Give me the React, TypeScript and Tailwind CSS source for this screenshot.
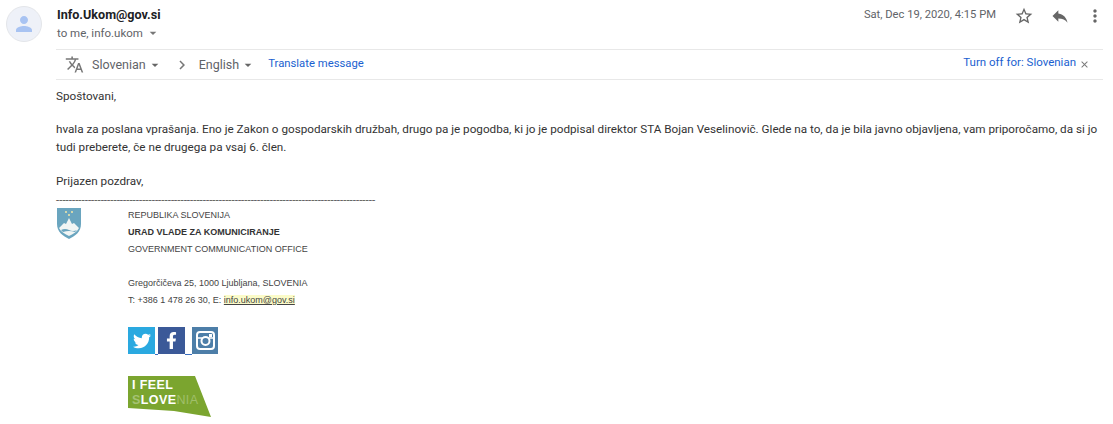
import { MdClose, MdMoreVert, MdPerson, MdReply, MdStarBorder, MdTranslate, MdArrowDropDown, MdChevronRight } from "react-icons/md";
import { FaFacebookF, FaTwitter } from "react-icons/fa";

function Crest() {
  return (
    <svg width="26" height="32" viewBox="0 0 26 32">
      <path d="M1 1 H25 V17 C25 25 19 29 13 32 C7 29 1 25 1 17 Z" fill="#6aa5bf" />
      <path d="M3 21 L8 16 L10 17 L13 11 L16 17 L18 16 L23 21 C21 25 17 27 13 29 C9 27 5 25 3 21 Z" fill="#f1f5f4" />
      <path d="M5 23 Q9 21 13 23 T21 23 L19 25 Q13 23 7 25 Z" fill="#6aa5bf" />
      <circle cx="10" cy="5" r="1" fill="#f5e9a8" />
      <circle cx="16" cy="5" r="1" fill="#f5e9a8" />
      <circle cx="13" cy="8" r="1" fill="#f5e9a8" />
    </svg>
  );
}

function InstagramGlyph() {
  return (
    <svg width="19" height="19" viewBox="0 0 19 19">
      <rect x="1" y="1" width="17" height="17" rx="3" fill="none" stroke="#fff" strokeWidth="2" />
      <path d="M1 7 H18" stroke="#fff" strokeWidth="1.5" />
      <circle cx="9.5" cy="10" r="4" fill="#4d7ea8" stroke="#fff" strokeWidth="2" />
      <rect x="13" y="3" width="3" height="3" fill="#fff" />
    </svg>
  );
}

function SloveniaBadge() {
  return (
    <div className="relative w-[84px] h-[43px]">
      <svg width="84" height="43" viewBox="0 0 84 43" className="absolute inset-0">
        <path d="M0 0 H67 L83 41 L46 35 L0 32 Z" fill="#7ba52f" />
      </svg>
      <div className="absolute left-[4px] top-[2px] text-[12.5px] leading-[14.5px] font-bold text-white tracking-[0.4px] font-['Liberation_Sans',sans-serif]">
        <div>I FEEL</div>
        <div className="flex">
          <span className="text-[#a5c274]">S</span>
          <span>LOVE</span>
          <span className="text-[#a0bf6a] font-normal">NIA</span>
        </div>
      </div>
    </div>
  );
}

export default function App() {
  return (
    <div className="w-[1113px] h-[424px] overflow-hidden bg-white flex pl-[6px] pt-[6px] text-[#222] font-['Roboto',sans-serif] text-[12px]">
      <div className="w-[36px] h-[36px] rounded-full bg-[#eef1f8] border border-[#e4e6ea] flex items-center justify-center shrink-0">
        <MdPerson size={24} className="text-[#a8c3f2]" />
      </div>

      <div className="ml-[14px] w-[1047px]">
        <div className="flex justify-between h-[43px]">
          <div>
            <div className="text-[12.6px] leading-[18px] font-bold text-[#202124] ml-px">Info.Ukom@gov.si</div>
            <div className="flex items-center leading-[16px] mt-[1px] ml-px text-[#5f6368] text-[11.5px]">
              to me, info.ukom
              <MdArrowDropDown size={16} className="ml-[2px] text-[#777]" />
            </div>
          </div>
          <div className="flex items-start text-[#5f6368] text-[11.2px] pt-[1px]">
            <span className="leading-[16px] mr-[18px]">Sat, Dec 19, 2020, 4:15 PM</span>
            <MdStarBorder size={20} className="text-[#666] mr-[16px] -mt-[1px]" />
            <MdReply size={20} className="text-[#666] mr-[15px] -mt-[1px]" />
            <MdMoreVert size={20} className="text-[#666] -mr-[2px] -mt-[1px]" />
          </div>
        </div>

        <div className="h-[31px] border-y border-[#e8e8e8] flex items-center justify-between text-[12.5px]">
          <div className="flex items-center text-[#5f6368] pl-[9px]">
            <MdTranslate size={19} className="text-[#777] mr-[8px]" />
            <span className="mt-[1px]">Slovenian</span>
            <MdArrowDropDown size={16} className="ml-[1px] text-[#666]" />
            <MdChevronRight size={18} className="ml-[10px] text-[#777]" />
            <span className="ml-[8px] mt-[1px]">English</span>
            <MdArrowDropDown size={16} className="ml-[1px] text-[#666]" />
            <span className="ml-[12px] text-[#1a5fd0] text-[11.3px]">Translate message</span>
          </div>
          <div className="flex items-center text-[#1a5fd0] text-[11.5px] pr-[13px] -mt-[4px]">
            <span>Turn off for: Slovenian</span>
            <MdClose size={11} className="ml-[3px] mt-[4px] text-[#777]" />
          </div>
        </div>

        <div className="leading-[18px] text-[#333] text-[11.7px] mt-[7px]">
          <div>Spoštovani,</div>
          <div className="mt-[15px] w-[1050px]">
            hvala za poslana vprašanja. Eno je Zakon o gospodarskih družbah, drugo pa je pogodba, ki jo je podpisal direktor STA Bojan Veselinovič. Glede na to, da je bila javno objavljena, vam priporočamo, da si jo tudi preberete, če ne drugega pa vsaj 6. člen.
          </div>
          <div className="mt-[16px]">Prijazen pozdrav,</div>
          <div className="leading-[10px] whitespace-nowrap text-[#555] text-[11.55px] mt-[5px]">
            ----------------------------------------------------------------------------------------------------
          </div>
        </div>

        <div className="flex font-['Liberation_Sans',sans-serif]">
          <div className="w-[72px] shrink-0 pt-[2px]">
            <Crest />
          </div>
          <div>
            <div className="text-[9px] leading-[17px] text-[#444] pt-[2px]">
              <div>REPUBLIKA SLOVENIJA</div>
              <div className="font-bold text-[#333]">URAD VLADE ZA KOMUNICIRANJE</div>
              <div>GOVERNMENT COMMUNICATION OFFICE</div>
              <div className="h-[17px]" />
              <div>Gregorčičeva 25, 1000 Ljubljana, SLOVENIA</div>
              <div>
                T: +386 1 478 26 30, E: <span className="underline bg-[#fbfbc8] text-[#444]">info.ukom@gov.si</span>
              </div>
            </div>

            <div className="flex mt-[18px]">
              <div className="w-[27px] h-[27px] bg-[#2aa9e0] flex items-center justify-center">
                <FaTwitter size={18} className="text-white" />
              </div>
              <div className="w-[3px] h-[28px] border-b border-[#3b6fc0]" />
              <div className="w-[27px] h-[27px] bg-[#3b5998] flex items-center justify-center">
                <FaFacebookF size={17} className="text-white" />
              </div>
              <div className="w-[7px] h-[28px] border-b border-[#3b6fc0]" />
              <div className="w-[26px] h-[27px] bg-[#4d7ea8] flex items-center justify-center">
                <InstagramGlyph />
              </div>
            </div>

            <div className="mt-[21px]">
              <SloveniaBadge />
            </div>
          </div>
        </div>
      </div>
    </div>
  );
}
